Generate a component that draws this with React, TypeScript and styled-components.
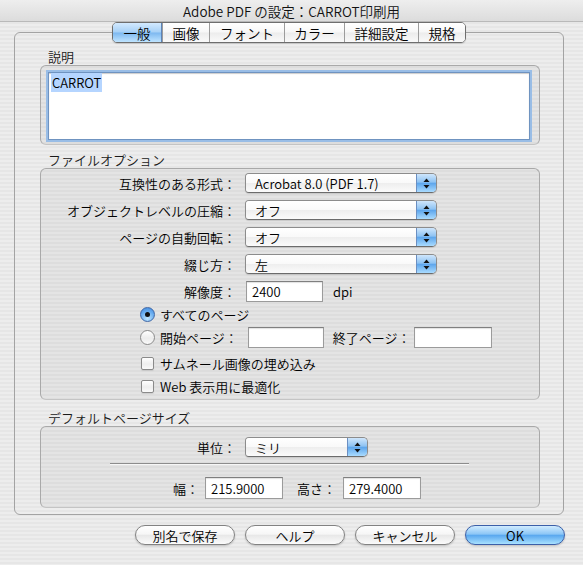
import React from "react";
import styled, { createGlobalStyle, css } from "styled-components";

const Global = createGlobalStyle`
  html, body { margin: 0; padding: 0; }
  body {
    font-family: "Noto Sans CJK JP", "Noto Sans", sans-serif;
    font-size: 13px;
    font-weight: 350;
    color: #000;
  }
  * { box-sizing: border-box; }
`;

const stripes = `repeating-linear-gradient(to bottom, #ededed 0px, #ededed 2px, #e6e6e6 2px, #e6e6e6 4px)`;

const Window = styled.div`
  width: 583px;
  height: 565px;
  overflow: hidden;
  display: flex;
  flex-direction: column;
  background: ${stripes};
`;

const TitleBar = styled.div`
  height: 22px;
  flex: 0 0 22px;
  display: flex;
  align-items: center;
  justify-content: center;
  font-size: 13.5px;
  color: #111;
  background: linear-gradient(to bottom, #eeeeee, #dcdcdc);
  border-bottom: 1px solid #b9b9b9;
  padding-top: 1px;
`;

const Content = styled.div`
  display: flex;
  flex-direction: column;
  padding: 0 19px 0 14px;
`;

const TabStrip = styled.div`
  position: relative;
  z-index: 1;
  display: flex;
  align-self: flex-start;
  margin-left: 98px;
  margin-bottom: -11px;
  height: 21px;
  border: 1px solid #6e6e6e;
  border-radius: 5px;
  overflow: hidden;
  box-shadow: 0 1px 1px rgba(0, 0, 0, 0.15);
`;

const Tab = styled.div<{ $w: number; $active?: boolean }>`
  width: ${(p) => p.$w}px;
  display: flex;
  align-items: center;
  justify-content: center;
  font-size: 13.5px;
  border-left: 1px solid #9c9c9c;
  &:first-child { border-left: none; }
  ${(p) =>
    p.$active
      ? css`
          background: linear-gradient(to bottom, #d3eaff 0%, #a6d0f6 48%, #7db8f0 52%, #bfe4ff 100%);
          border-right: 1px solid #5d84b8;
        `
      : css`
          background: linear-gradient(to bottom, #ffffff 0%, #f7f7f7 48%, #ececec 52%, #fafafa 100%);
        `}
`;

const Panel = styled.div`
  border: 1px solid #a3a3a3;
  border-radius: 6px;
  height: 483px;
  padding: 16px 23px 4px 25px;
  display: flex;
  flex-direction: column;
`;

const Section = styled.div<{ $mt?: number }>`
  display: flex;
  flex-direction: column;
  margin-top: ${(p) => p.$mt ?? 0}px;
`;

const SectionLabel = styled.div`
  height: 16px;
  line-height: 16px;
  padding-left: 8px;
  font-size: 13px;
  color: #1a1a1a;
`;

const GroupBox = styled.div<{ $h: number; $pad?: string }>`
  height: ${(p) => p.$h}px;
  border: 1px solid #a9a9a9;
  border-bottom-color: #c4c4c4;
  border-radius: 6px;
  background: rgba(0, 0, 0, 0.035);
  padding: ${(p) => p.$pad ?? "0"};
  display: flex;
  flex-direction: column;
`;

const FocusField = styled.div`
  flex: 1;
  margin: 2px;
  background: #fff;
  border: 1px solid #6f93c0;
  box-shadow: 0 0 0 2px #99bde6, inset 0 1px 1px rgba(0, 0, 0, 0.2);
  padding: 2px 2px;
  font-size: 13px;
  line-height: 16px;
`;

const Selected = styled.span`
  background: #b5d5ff;
  padding: 0 1px;
`;

const Row = styled.div<{ $mt?: number; $h?: number; $pl?: number }>`
  display: flex;
  align-items: center;
  height: ${(p) => p.$h ?? 20}px;
  margin-top: ${(p) => p.$mt ?? 0}px;
  padding-left: ${(p) => p.$pl ?? 0}px;
`;

const FieldLabel = styled.div<{ $w: number; $gap?: number }>`
  width: ${(p) => p.$w}px;
  flex: 0 0 ${(p) => p.$w}px;
  text-align: right;
  margin-right: ${(p) => p.$gap ?? 9}px;
  white-space: nowrap;
`;

const Text = styled.span<{ $ml?: number; $mr?: number }>`
  margin-left: ${(p) => p.$ml ?? 0}px;
  margin-right: ${(p) => p.$mr ?? 0}px;
  white-space: nowrap;
`;

const PopupBox = styled.div<{ $w: number }>`
  width: ${(p) => p.$w}px;
  height: 20px;
  display: flex;
  border: 1px solid #8c8c8c;
  border-bottom-color: #6c6c6c;
  border-radius: 4px 5px 5px 4px;
  overflow: hidden;
  box-shadow: 0 1px 1px rgba(0, 0, 0, 0.12);
`;

const PopupValue = styled.div`
  flex: 1;
  display: flex;
  align-items: center;
  padding-left: 9px;
  font-size: 13px;
  background: linear-gradient(to bottom, #ffffff 0%, #f9f9f9 50%, #eeeeee 52%, #fbfbfb 100%);
`;

const PopupArrows = styled.div`
  width: 20px;
  flex: 0 0 20px;
  display: flex;
  align-items: center;
  justify-content: center;
  border-left: 1px solid #6b8fc2;
  background: linear-gradient(to bottom, #cfe6fc 0%, #8ec3f3 45%, #5ea6ec 52%, #a9dbff 100%);
`;

const TextField = styled.div<{ $w: number; $h?: number }>`
  width: ${(p) => p.$w}px;
  flex: 0 0 ${(p) => p.$w}px;
  height: ${(p) => p.$h ?? 21}px;
  background: #fff;
  border: 1px solid #9b9b9b;
  border-top-color: #7f7f7f;
  box-shadow: inset 0 1px 1px rgba(0, 0, 0, 0.12);
  display: flex;
  align-items: center;
  padding-left: 5px;
  font-size: 13px;
`;

const Radio = styled.div<{ $on?: boolean }>`
  width: 15px;
  height: 15px;
  flex: 0 0 15px;
  border-radius: 50%;
  margin-right: 5px;
  display: flex;
  align-items: center;
  justify-content: center;
  ${(p) =>
    p.$on
      ? css`
          border: 1px solid #3f67a6;
          background: radial-gradient(circle at 50% 80%, #bfe6ff 0%, #6aaef0 55%, #3e86dc 100%);
        `
      : css`
          border: 1px solid #8a8a8a;
          background: linear-gradient(to bottom, #ffffff, #ececec 55%, #fafafa);
        `}
`;

const Dot = styled.div`
  width: 5px;
  height: 5px;
  border-radius: 50%;
  background: #111;
`;

const Check = styled.div`
  width: 13px;
  height: 13px;
  flex: 0 0 13px;
  margin: 0 6px 0 1px;
  border: 1px solid #8a8a8a;
  border-radius: 2px;
  background: linear-gradient(to bottom, #ffffff, #eeeeee 55%, #fafafa);
  box-shadow: 0 1px 1px rgba(0, 0, 0, 0.1);
`;

const Separator = styled.div`
  margin: 6px 0 0 69px;
  width: 359px;
  height: 2px;
  border-top: 1px solid #8d8d8d;
  border-bottom: 1px solid #f7f7f7;
`;

const ButtonRow = styled.div`
  display: flex;
  justify-content: flex-end;
  gap: 10px;
  padding-right: 18px;
  margin-top: 10px;
`;

const Button = styled.div<{ $primary?: boolean }>`
  width: 100px;
  height: 20px;
  border-radius: 10px;
  display: flex;
  align-items: center;
  justify-content: center;
  font-size: 13px;
  box-shadow: 0 1px 2px rgba(0, 0, 0, 0.2);
  ${(p) =>
    p.$primary
      ? css`
          border: 1px solid #3c5fa8;
          background: linear-gradient(to bottom, #d1ecff 0%, #8cc6f6 45%, #5aa8ef 52%, #a8e1ff 100%);
        `
      : css`
          border: 1px solid #828282;
          background: linear-gradient(to bottom, #ffffff 0%, #f6f6f6 45%, #e8e8e8 52%, #fbfbfb 100%);
        `}
`;

const Arrows = () => (
  <svg width="7" height="11" viewBox="0 0 7 11">
    <path d="M3.5 0.5 L6.5 4 L0.5 4 Z" fill="#111" />
    <path d="M3.5 10.5 L6.5 7 L0.5 7 Z" fill="#111" />
  </svg>
);

const Popup = ({ w, value }: { w: number; value: string }) => (
  <PopupBox $w={w}>
    <PopupValue>{value}</PopupValue>
    <PopupArrows>
      <Arrows />
    </PopupArrows>
  </PopupBox>
);

const tabs = [
  { label: "一般", w: 49, active: true },
  { label: "画像", w: 47 },
  { label: "フォント", w: 75 },
  { label: "カラー", w: 60 },
  { label: "詳細設定", w: 74 },
  { label: "規格", w: 47 },
];

const popupRows = [
  { label: "互換性のある形式：", value: "Acrobat 8.0 (PDF 1.7)" },
  { label: "オブジェクトレベルの圧縮：", value: "オフ" },
  { label: "ページの自動回転：", value: "オフ" },
  { label: "綴じ方：", value: "左" },
];

export default function App() {
  return (
    <>
      <Global />
      <Window>
        <TitleBar>Adobe PDF の設定：CARROT印刷用</TitleBar>
        <Content>
          <TabStrip>
            {tabs.map((t) => (
              <Tab key={t.label} $w={t.w} $active={t.active}>
                {t.label}
              </Tab>
            ))}
          </TabStrip>
          <Panel>
            <Section>
              <SectionLabel>説明</SectionLabel>
              <GroupBox $h={80} $pad="4px 7px 2px 5px">
                <FocusField>
                  <Selected>CARROT</Selected>
                </FocusField>
              </GroupBox>
            </Section>

            <Section $mt={7}>
              <SectionLabel>ファイルオプション</SectionLabel>
              <GroupBox $h={232} $pad="4px 0 0 0">
                {popupRows.map((r, i) => (
                  <Row key={r.label} $mt={i === 0 ? 0 : 7}>
                    <FieldLabel $w={195}>{r.label}</FieldLabel>
                    <Popup w={192} value={r.value} />
                  </Row>
                ))}
                <Row $mt={7} $h={21}>
                  <FieldLabel $w={195} $gap={10}>解像度：</FieldLabel>
                  <TextField $w={77}>2400</TextField>
                  <Text $ml={10}>dpi</Text>
                </Row>
                <Row $mt={4} $h={16} $pl={99}>
                  <Radio $on>
                    <Dot />
                  </Radio>
                  <Text>すべてのページ</Text>
                </Row>
                <Row $mt={5} $h={21} $pl={99}>
                  <Radio />
                  <Text $mr={10}>開始ページ：</Text>
                  <TextField $w={76} />
                  <Text $ml={9} $mr={3}>終了ページ：</Text>
                  <TextField $w={78} />
                </Row>
                <Row $mt={7} $h={16} $pl={99}>
                  <Check />
                  <Text>サムネール画像の埋め込み</Text>
                </Row>
                <Row $mt={7} $h={16} $pl={99}>
                  <Check />
                  <Text>Web 表示用に最適化</Text>
                </Row>
              </GroupBox>
            </Section>

            <Section $mt={10}>
              <SectionLabel>デフォルトページサイズ</SectionLabel>
              <GroupBox $h={82} $pad="10px 0 0 0">
                <Row>
                  <FieldLabel $w={195}>単位：</FieldLabel>
                  <Popup w={123} value="ミリ" />
                </Row>
                <Separator />
                <Row $mt={12} $h={22}>
                  <FieldLabel $w={158} $gap={6}>幅：</FieldLabel>
                  <TextField $w={78} $h={22}>215.9000</TextField>
                  <Text $ml={14} $mr={7}>高さ：</Text>
                  <TextField $w={78} $h={22}>279.4000</TextField>
                </Row>
              </GroupBox>
            </Section>
          </Panel>
        </Content>
        <ButtonRow>
          <Button>別名で保存</Button>
          <Button>ヘルプ</Button>
          <Button>キャンセル</Button>
          <Button $primary>OK</Button>
        </ButtonRow>
      </Window>
    </>
  );
}
